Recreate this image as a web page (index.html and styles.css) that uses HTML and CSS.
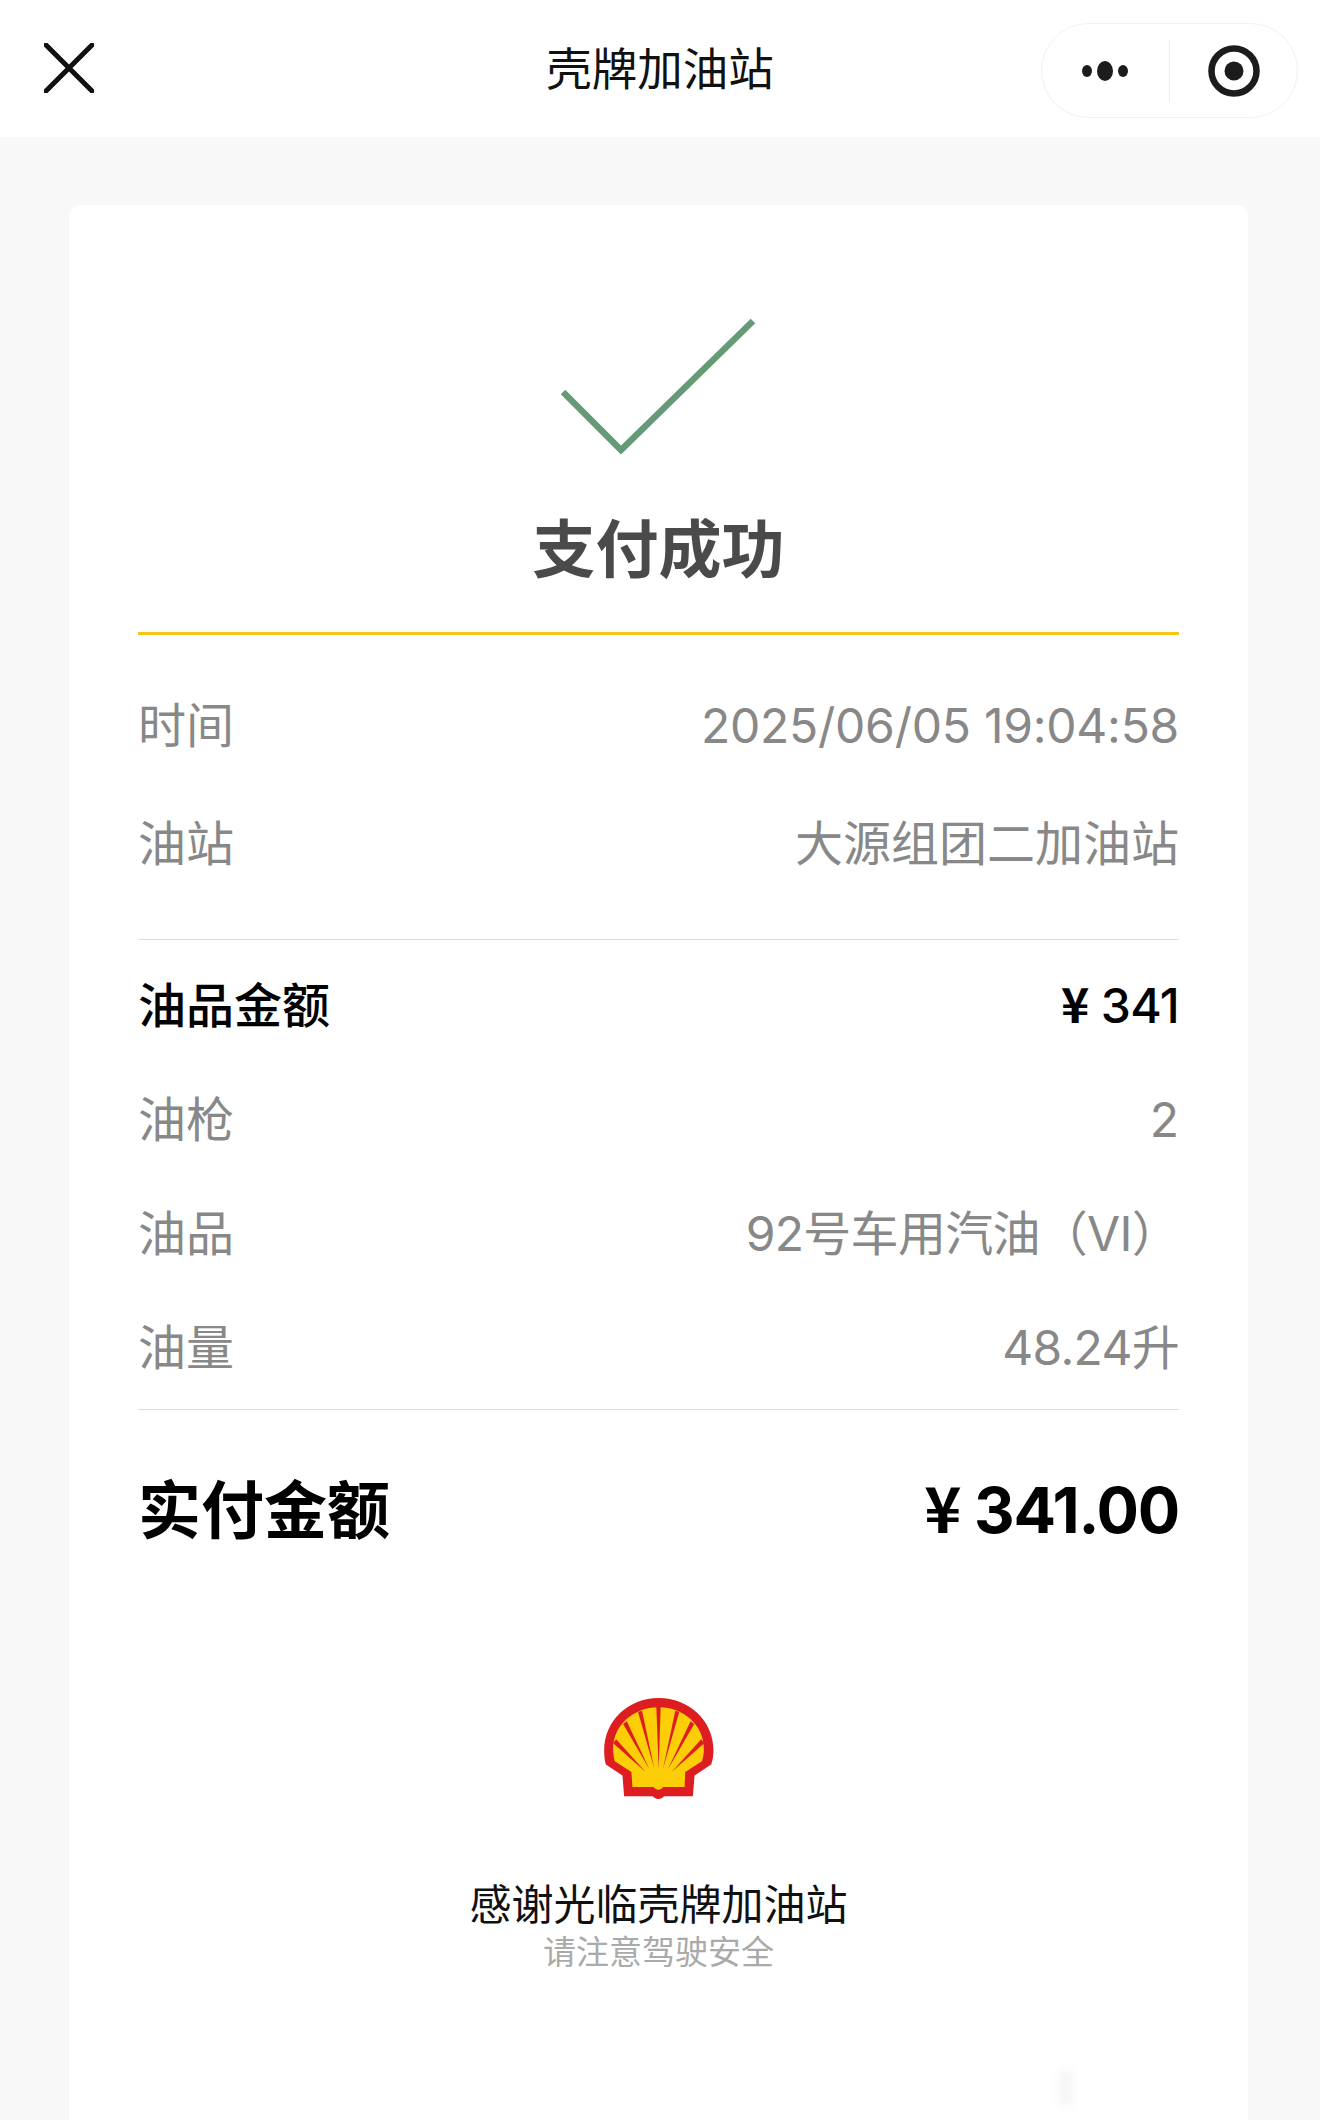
FILE: index.html
```html
<!DOCTYPE html>
<html lang="zh-CN">

<head>
  <meta charset="UTF-8">
  <meta name="viewport" content="width=device-width, initial-scale=1.0">
  <title>壳牌加油站</title>

  <link rel="stylesheet" href="styles.css">
</head>

<body>
  <div class="navBar">
    <svg class="closeIcon" width="50" height="50" viewBox="0 0 50 50">
      <path d="M2 2L48 48M48 2L2 48" fill="none" stroke="#111" stroke-width="5" stroke-linecap="round" />
    </svg>
    <h1 class="navTitle">壳牌加油站</h1>
    <div class="capsule">
      <svg class="moreIcon" width="46" height="20" viewBox="0 0 46 20">
        <ellipse cx="5" cy="10" rx="5" ry="6" fill="#1c1c1c" />
        <ellipse cx="23" cy="10" rx="8" ry="10" fill="#1c1c1c" />
        <ellipse cx="41" cy="10" rx="5" ry="6" fill="#1c1c1c" />
      </svg>
      <span class="capsuleLine"></span>
      <svg class="targetIcon" width="52" height="52" viewBox="0 0 52 52">
        <circle cx="26" cy="26" r="22.5" fill="none" stroke="#1c1c1c" stroke-width="6.5" />
        <circle cx="26" cy="26" r="9.5" fill="#1c1c1c" />
      </svg>
    </div>
  </div>

  <div class="page">
    <div class="card">
      <svg class="checkIcon" width="200" height="136" viewBox="0 0 200 136">
        <path d="M2 74L60 132L192 3" fill="none" stroke="#659a76" stroke-width="6.5" />
      </svg>
      <h2 class="resultTitle">支付成功</h2>

      <div class="section sectionTop">
        <div class="row"><span>时间</span><span class="dateValue">2025/06/05 19:04:58</span></div>
        <div class="row"><span>油站</span><span>大源组团二加油站</span></div>
      </div>

      <div class="section sectionFuel">
        <div class="row rowStrong"><span>油品金额</span><span class="numValue"><span class="yen">¥</span> 341</span></div>
        <div class="row"><span>油枪</span><span>2</span></div>
        <div class="row"><span>油品</span><span class="numValue">92号车用汽油（VI）</span></div>
        <div class="row"><span>油量</span><span class="numValue">48.24升</span></div>
      </div>

      <div class="row rowTotal"><span>实付金额</span><span class="totalValue"><span class="yen">¥</span> 341.00</span></div>

      <svg class="shellLogo" width="110" height="101" viewBox="103 82 330 304">
        <path fill="#dd1d21" d="M266 386C258 386 252 382 249 378H163L158 315L108 282C104 268 103 254 103 240C103 150 176 82 267 82C358 82 432 150 432 240C432 254 430 268 425 282L375 315L370 378H283C280 382 274 386 266 386Z" />
        <path fill="#fbce07" d="M188 350L185 305L135 272C131 260 130 248 130 235C130 165 190 110 267 110C344 110 403 165 403 235C403 248 402 260 397 272L347 305L345 350H281C277 354 272 358 266 358C260 358 255 354 251 350Z" />
        <path fill="#dd1d21" d="M260 108H273L267 296Z" />
        <path fill="#dd1d21" d="M205 124L217 120L254 296Z" />
        <path fill="#dd1d21" d="M329 124L317 120L280 296Z" />
        <path fill="#dd1d21" d="M160 160L171 152L240 298Z" />
        <path fill="#dd1d21" d="M374 160L363 152L294 298Z" />
        <path fill="#dd1d21" d="M130 218L139 206L228 305Z" />
        <path fill="#dd1d21" d="M404 218L395 206L306 305Z" />
      </svg>

      <p class="thanks">感谢光临壳牌加油站</p>
      <p class="safety">请注意驾驶安全</p>
    </div>
  </div>

  <div class="cornerMark"></div>
</body>

</html>
```

FILE: styles.css
```css
* {
  box-sizing: border-box;
}

html,
body {
  margin: 0;
  height: 2120px;
  overflow: hidden;
}

body {
  position: relative;
  background-color: #f8f8f8;
  font-family: Inter, "Noto Sans CJK SC", sans-serif;
}

.navBar {
  display: flex;
  align-items: center;
  justify-content: center;
  position: relative;
  height: 137px;
  padding-bottom: 5px;
  background-color: #fff;
}

.closeIcon {
  position: absolute;
  left: 44px;
  top: 43px;
}

.navTitle {
  margin: 0;
  font-size: 45.5px;
  font-weight: 400;
  color: #111;
}

.capsule {
  display: flex;
  align-items: center;
  position: absolute;
  left: 1041px;
  top: 23px;
  width: 257px;
  height: 95px;
  border: 1px solid #f1f1f1;
  border-radius: 48px;
}

.moreIcon {
  margin-left: 40px;
}

.capsuleLine {
  width: 1px;
  height: 62px;
  margin-left: 41px;
  background-color: #eee;
}

.targetIcon {
  margin-left: 38px;
}

.page {
  padding: 68px 72px 0 69px;
}

.card {
  display: flex;
  flex-direction: column;
  height: 1960px;
  padding: 113px 69px 0 69px;
  background-color: #fff;
  border-radius: 12px;
}

.checkIcon {
  margin-left: 423px;
}

.resultTitle {
  margin: 50px 0 0;
  height: 90px;
  font-size: 63px;
  line-height: 90px;
  font-weight: 700;
  text-align: center;
  color: #4a4a4a;
}

.section {
  display: flex;
  flex-direction: column;
}

.sectionTop {
  gap: 46px;
  margin-top: 38px;
  padding: 55px 0 59px;
  border-top: 3px solid #f5c518;
  border-bottom: 1px solid #ddd;
}

.sectionFuel {
  gap: 42px;
  padding: 30px 0 25px;
  border-bottom: 1px solid #ddd;
}

.row {
  display: flex;
  justify-content: space-between;
  height: 72px;
  font-size: 48px;
  line-height: 72px;
  color: #888;
}

.dateValue {
  letter-spacing: -0.25px;
}

.numValue {
  letter-spacing: -0.7px;
}

.rowStrong {
  font-weight: 500;
  color: #000;
}

.rowTotal {
  margin-top: 55px;
  height: 90px;
  font-size: 63px;
  line-height: 90px;
  font-weight: 700;
  color: #000;
}

.totalValue {
  letter-spacing: -1.2px;
}

.yen {
  font-family: "Noto Sans CJK SC", sans-serif;
  font-weight: 700;
  line-height: 0;
}

.shellLogo {
  align-self: center;
  margin-top: 143px;
}

.thanks {
  margin: 81px 0 0;
  font-size: 42px;
  line-height: 50px;
  text-align: center;
  color: #111;
}

.safety {
  margin: 2px 0 0;
  font-size: 33px;
  line-height: 40px;
  text-align: center;
  color: #aaa;
}

/* faint smudge near the bottom edge */
.cornerMark {
  position: absolute;
  left: 1059px;
  top: 2070px;
  width: 14px;
  height: 36px;
  background-color: #f6f6f6;
  filter: blur(4px);
}
```
